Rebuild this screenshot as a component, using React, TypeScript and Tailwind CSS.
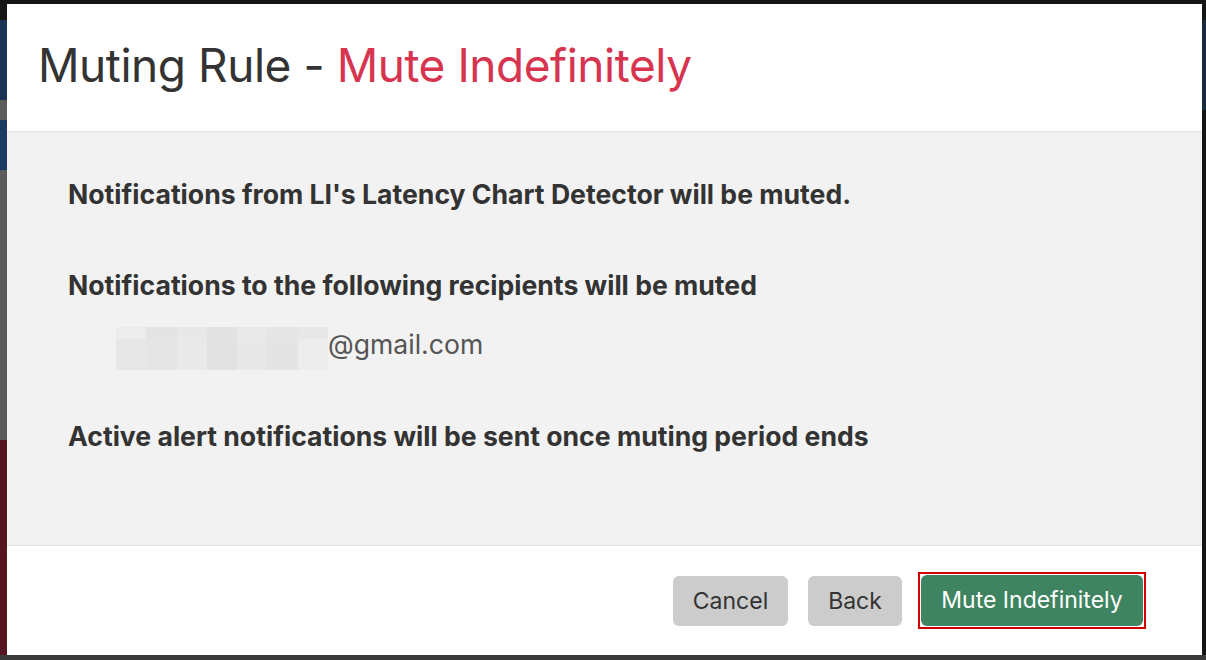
function Blurred() {
  const shades = ["#ececec", "#e4e4e4", "#e8e8e8", "#e2e2e2", "#e9e9e9", "#e5e5e5", "#e7e7e7"];
  return (
    <span className="inline-flex flex-col w-[212px] h-[43px]">
      <span className="flex h-[12px]">
        {shades.map((c, i) => (
          <span key={i} className="flex-1" style={{ background: c }} />
        ))}
      </span>
      <span className="flex flex-1">
        {shades.slice().reverse().map((c, i) => (
          <span key={i} className="flex-1" style={{ background: c }} />
        ))}
      </span>
    </span>
  );
}

export default function App() {
  return (
    <div className="relative w-[1206px] h-[660px] overflow-hidden bg-[#151515] font-['Inter',sans-serif]">
      {/* page behind the modal */}
      <div className="absolute left-0 top-[20px] w-[7px] bottom-0 flex flex-col">
        <div className="h-[80px] bg-[#1b3352]" />
        <div className="h-[20px] bg-[#5c5c5c]" />
        <div className="h-[50px] bg-[#1a3a63]" />
        <div className="h-[270px] bg-[#5a5a5a]" />
        <div className="flex-1 bg-[#571520]" />
      </div>
      <div className="absolute right-0 top-[20px] w-[4px] h-[90px] bg-[#1b2a3a]" />
      <div className="absolute left-0 right-0 bottom-0 h-[5px] bg-[#3a3a3a]" />

      {/* modal */}
      <div className="absolute left-[7px] top-[4px] w-[1195px] h-[651px] flex flex-col bg-white">
        <div className="h-[128px] border-b border-[#e2e2e2] flex items-center pl-[31px] pb-[6px]">
          <h1 className="text-[46px] leading-none tracking-[-0.01em] text-[#333333]">
            Muting Rule - <span className="text-[#d7344f]">Mute Indefinitely</span>
          </h1>
        </div>
        <div className="flex-1 bg-[#f2f2f2] border-b border-[#e2e2e2] pl-[61px] pt-[46px] text-[#333333]">
          <p className="text-[26.6px] font-bold leading-[32px]">
            Notifications from LI's Latency Chart Detector will be muted.
          </p>
          <p className="mt-[59px] text-[26.6px] font-bold leading-[32px]">
            Notifications to the following recipients will be muted
          </p>
          <div className="mt-[26px] ml-[48px] flex items-center">
            <Blurred />
            <span className="text-[26.6px] text-[#555555] leading-[32px] -mt-[9px]">@gmail.com</span>
          </div>
          <p className="mt-[50px] text-[26.6px] font-bold leading-[32px]">
            Active alert notifications will be sent once muting period ends
          </p>
        </div>
        <div className="h-[109px] flex items-start justify-end gap-[20px] pt-[30px] pr-[56px]">
          <button className="h-[50px] w-[115px] rounded-[6px] bg-[#cccccc] text-[23px] text-[#333333]">
            Cancel
          </button>
          <button className="h-[50px] w-[94px] rounded-[6px] bg-[#cccccc] text-[23px] text-[#333333]">
            Back
          </button>
          <div className="-ml-[4px] -mt-[4px] border-2 border-[#d40000] p-[1px]">
            <button className="h-[51px] w-[222px] rounded-[6px] bg-[#3f8461] text-[23px] text-white">
              Mute Indefinitely
            </button>
          </div>
        </div>
      </div>
    </div>
  );
}
